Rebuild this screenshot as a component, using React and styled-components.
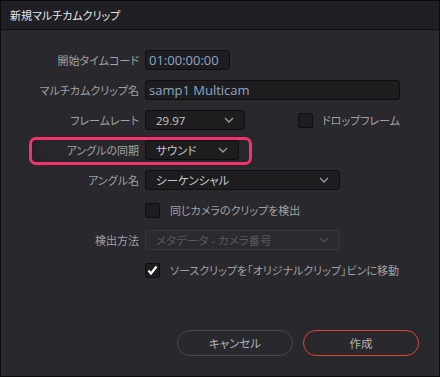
import styled, { createGlobalStyle } from "styled-components";

const GlobalStyle = createGlobalStyle`
  html, body {
    margin: 0;
    padding: 0;
    background: #28282d;
  }
  body {
    font-family: "Noto Sans CJK JP", "Open Sans", sans-serif;
    font-feature-settings: "palt";
  }
`;

const Window = styled.div`
  width: 440px;
  height: 377px;
  box-sizing: border-box;
  border: 1px solid #0b0b0d;
  background: #28282d;
  display: flex;
  flex-direction: column;
`;

const TitleBar = styled.div`
  height: 28px;
  border-bottom: 1px solid #101013;
  background: #1f1f24;
  display: flex;
  align-items: center;
  padding-left: 9px;
  color: #e6e6e6;
  font-size: 11px;
`;

const Form = styled.div`
  display: grid;
  grid-template-columns: 138px 1fr;
  grid-auto-rows: 30px;
  column-gap: 6px;
  align-items: center;
  padding-top: 15px;
`;

const Label = styled.div`
  text-align: right;
  color: #a2a2a4;
  font-size: 11px;
  white-space: nowrap;
  position: relative;
  z-index: 1;
`;

const Cell = styled.div`
  display: flex;
  align-items: center;
  position: relative;
`;

const Input = styled.div`
  box-sizing: border-box;
  width: ${(p) => p.$w}px;
  height: 20px;
  background: #1d1d20;
  border: 1px solid #0f0f11;
  border-radius: 3px;
  display: flex;
  align-items: center;
  padding-left: 3px;
  color: #8fa6c6;
  font-family: "Open Sans", sans-serif;
  font-size: 13px;
`;

const Select = styled.div`
  box-sizing: border-box;
  width: ${(p) => p.$w}px;
  height: 20px;
  background: ${(p) => (p.$disabled ? "#2a2a2f" : "#1d1d20")};
  border: 1px solid ${(p) => (p.$disabled ? "#38383d" : "#0f0f11")};
  border-radius: 3px;
  display: flex;
  align-items: center;
  justify-content: space-between;
  padding: 0 10px 0 10px;
  color: ${(p) => (p.$disabled ? "#58585d" : "#c6c6c8")};
  font-family: "Open Sans", "Noto Sans CJK JP", sans-serif;
  font-size: 11.5px;
  position: relative;
  z-index: 1;
`;

const Box = styled.div`
  box-sizing: border-box;
  width: 15px;
  height: 15px;
  background: #1d1d20;
  border: 1px solid #0f0f11;
  border-radius: 2px;
  margin-left: ${(p) => p.$ml || 0}px;
  display: flex;
  align-items: center;
  justify-content: center;
`;

const CheckText = styled.span`
  margin-left: ${(p) => p.$ml || 10}px;
  color: #a2a2a4;
  font-size: 11px;
  white-space: nowrap;
`;

const Highlight = styled.div`
  position: absolute;
  left: 28px;
  top: 2px;
  width: 223px;
  height: 28px;
  box-sizing: border-box;
  border: 3px solid #f2336e;
  border-radius: 7px;
  box-shadow: inset 6px 0 8px rgba(0, 0, 0, 0.15);
  pointer-events: none;
`;

const Row = styled.div`
  display: contents;
`;

const Wide = styled.div`
  grid-column: 1 / -1;
  position: relative;
  display: grid;
  grid-template-columns: 138px 1fr;
  column-gap: 6px;
  align-items: center;
  height: 30px;
`;

const Buttons = styled.div`
  display: flex;
  justify-content: flex-end;
  gap: 10px;
  padding-right: 20px;
  margin-top: 45px;
`;

const Button = styled.div`
  box-sizing: border-box;
  width: 116px;
  height: 26px;
  border-radius: 13px;
  border: 1px solid ${(p) => (p.$primary ? "#dd4538" : "#46464c")};
  display: flex;
  align-items: center;
  justify-content: center;
  color: #b4b4b6;
  font-size: 11.5px;
`;

const Chevron = ({ color = "#9a9a9e" }) => (
  <svg width="10" height="6" viewBox="0 0 10 6">
    <polyline points="1,1 5,5 9,1" fill="none" stroke={color} strokeWidth="1.4" />
  </svg>
);

const Check = () => (
  <svg width="11" height="10" viewBox="0 0 11 10">
    <polyline points="1.5,5.5 4,8.5 9.5,1.5" fill="none" stroke="#ffffff" strokeWidth="2.2" />
  </svg>
);

export default function App() {
  return (
    <>
      <GlobalStyle />
      <Window>
        <TitleBar>新規マルチカムクリップ</TitleBar>
        <Form>
          <Row>
            <Label>開始タイムコード</Label>
            <Cell>
              <Input $w={85}>01:00:00:00</Input>
            </Cell>
          </Row>
          <Row>
            <Label>マルチカムクリップ名</Label>
            <Cell>
              <Input $w={255}>samp1 Multicam</Input>
            </Cell>
          </Row>
          <Row>
            <Label>フレームレート</Label>
            <Cell>
              <Select $w={100}>
                29.97
                <Chevron />
              </Select>
              <Box $ml={53} />
              <CheckText $ml={9}>ドロップフレーム</CheckText>
            </Cell>
          </Row>
          <Wide>
            <Highlight />
            <Label>アングルの同期</Label>
            <Cell>
              <Select $w={94}>
                サウンド
                <Chevron />
              </Select>
            </Cell>
          </Wide>
          <Row>
            <Label>アングル名</Label>
            <Cell>
              <Select $w={195}>
                シーケンシャル
                <Chevron />
              </Select>
            </Cell>
          </Row>
          <Row>
            <Label />
            <Cell>
              <Box />
              <CheckText>同じカメラのクリップを検出</CheckText>
            </Cell>
          </Row>
          <Row>
            <Label>検出方法</Label>
            <Cell>
              <Select $w={195} $disabled>
                メタデータ - カメラ番号
                <Chevron color="#4a4a4f" />
              </Select>
            </Cell>
          </Row>
          <Row>
            <Label />
            <Cell>
              <Box>
                <Check />
              </Box>
              <CheckText>ソースクリップを「オリジナルクリップ」ビンに移動</CheckText>
            </Cell>
          </Row>
        </Form>
        <Buttons>
          <Button>キャンセル</Button>
          <Button $primary>作成</Button>
        </Buttons>
      </Window>
    </>
  );
}
